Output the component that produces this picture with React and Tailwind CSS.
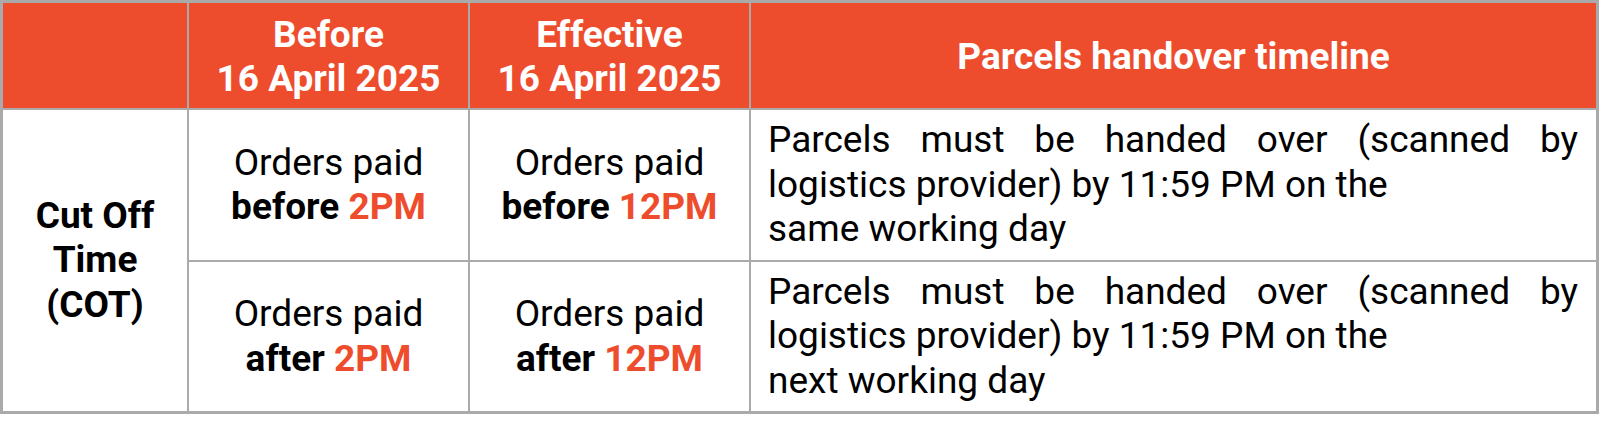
import React from 'react';

const ORANGE = 'text-[#ee4d2d]';

function HeaderCell({ children }) {
  return (
    <div className="flex items-center justify-center bg-[#ee4d2d] pt-[3px] text-center font-bold text-white">
      <div>{children}</div>
    </div>
  );
}

function PaidCell({ when, time }) {
  return (
    <div className="flex items-center justify-center bg-white text-center">
      <div>
        <div>Orders paid</div>
        <div>
          <span className="font-bold">{when}</span> <span className={`font-bold ${ORANGE}`}>{time}</span>
        </div>
      </div>
    </div>
  );
}

function TimelineCell({ day }) {
  return (
    <div className="flex flex-col justify-center bg-white pl-[17px] pr-[18px]">
      <div className="text-justify [text-align-last:justify]">Parcels must be handed over (scanned by</div>
      <div>logistics provider) by 11:59 PM on the</div>
      <div>{day} working day</div>
    </div>
  );
}

export default function App() {
  return (
    <div className="h-[426px] w-[1600px] bg-white font-['Roboto',sans-serif] text-[37px] leading-[44.5px] text-black">
      <div className="grid w-[1599px] grid-cols-[184px_279px_279px_1fr] grid-rows-[105px_150px_149px] gap-[2px] bg-[#aaaaaa] p-[3px]">
        {/* header */}
        <div className="bg-[#ee4d2d]" />
        <HeaderCell>
          Before
          <br />
          16 April 2025
        </HeaderCell>
        <HeaderCell>
          Effective
          <br />
          16 April 2025
        </HeaderCell>
        <HeaderCell>Parcels handover timeline</HeaderCell>

        {/* body */}
        <div className="row-span-2 flex items-center justify-center bg-white text-center font-bold">
          <div>
            Cut Off
            <br />
            Time
            <br />
            (COT)
          </div>
        </div>
        <PaidCell when="before" time="2PM" />
        <PaidCell when="before" time="12PM" />
        <TimelineCell day="same" />

        <PaidCell when="after" time="2PM" />
        <PaidCell when="after" time="12PM" />
        <TimelineCell day="next" />
      </div>
    </div>
  );
}
